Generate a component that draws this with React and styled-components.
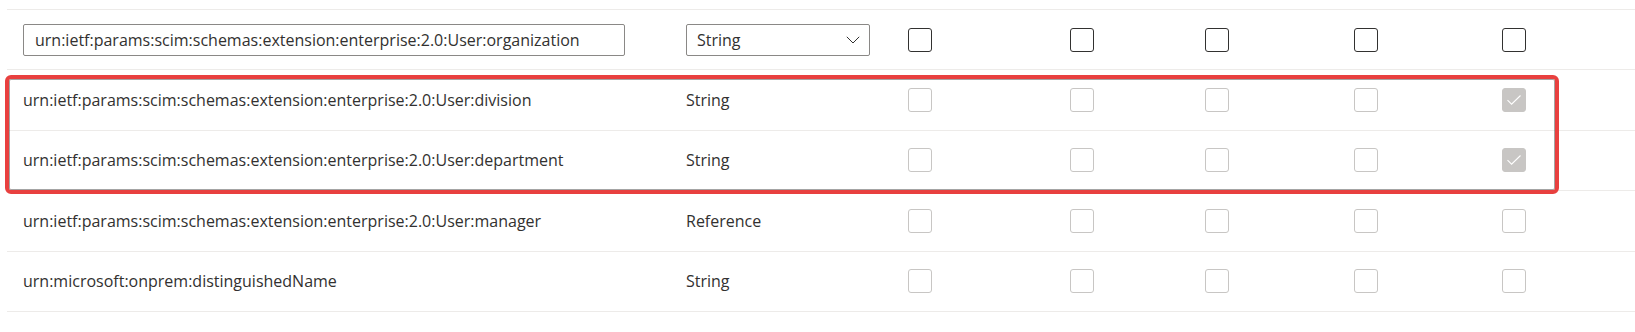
import React from "react";
import styled, { createGlobalStyle, css } from "styled-components";

const GlobalStyle = createGlobalStyle`
  html, body {
    margin: 0;
    padding: 0;
    background: #ffffff;
  }
  body {
    font-family: "Open Sans", "Noto Sans", sans-serif;
    color: #323130;
    overflow: hidden;
  }
`;

const Table = styled.div`
  margin: 9px 0 0 7px;
  border-top: 1px solid #edebe9;
`;

const Row = styled.div`
  display: grid;
  grid-template-columns: 679px 222px 162px 135px 149px 148px 1fr;
  align-items: center;
  height: 60.4px;
  box-sizing: border-box;
  border-bottom: 1px solid #edebe9;
`;

const NameCell = styled.div`
  padding-left: 16px;
  font-size: 16px;
  line-height: 22px;
  white-space: nowrap;
`;

const TypeCell = styled.div`
  font-size: 16px;
  line-height: 22px;
  white-space: nowrap;
`;

const FlagCell = styled.div`
  display: flex;
  align-items: center;
`;

const TextField = styled.input`
  display: block;
  box-sizing: border-box;
  width: 602px;
  height: 32px;
  margin: 0;
  padding: 0 11px;
  border: 1px solid #8a8886;
  border-radius: 2px;
  font: inherit;
  font-size: 16px;
  color: #323130;
  background: #ffffff;
  outline: none;
`;

const Dropdown = styled.div`
  box-sizing: border-box;
  width: 184px;
  height: 32px;
  padding: 0 9px 0 10px;
  border: 1px solid #8a8886;
  border-radius: 2px;
  display: flex;
  align-items: center;
  justify-content: space-between;
  font-size: 16px;
  color: #323130;
  background: #ffffff;
`;

const Chevron = styled.svg`
  width: 14px;
  height: 8px;
  flex: none;
`;

const Box = styled.span`
  display: inline-flex;
  align-items: center;
  justify-content: center;
  box-sizing: border-box;
  width: 24px;
  height: 24px;
  border-radius: 3px;
  border: 1px solid #323130;
  background: #ffffff;
  ${(p) =>
    p.$disabled &&
    css`
      border-color: #c8c6c4;
    `}
  ${(p) =>
    p.$checked &&
    css`
      border-color: #c8c6c4;
      background: #c8c6c4;
    `}
`;

const Highlight = styled.div`
  position: relative;
  &::after {
    content: "";
    position: absolute;
    top: 5px;
    left: -2px;
    right: 76px;
    bottom: -3px;
    border: 4px solid #e8403f;
    border-radius: 6px;
    box-shadow: inset 0 0 0 1px rgba(90, 90, 90, 0.55);
    pointer-events: none;
  }
`;

function Checkbox({ checked, disabled }) {
  return (
    <Box $checked={checked} $disabled={disabled} role="checkbox" aria-checked={!!checked}>
      {checked && (
        <svg width="16" height="12" viewBox="0 0 16 12">
          <path d="M1.5 6.2 L5.6 10.2 L14.5 1.5" fill="none" stroke="#ffffff" strokeWidth="1.1" />
        </svg>
      )}
    </Box>
  );
}

function Flags({ values, disabled }) {
  return values.map((v, i) => (
    <FlagCell key={i}>
      <Checkbox checked={v} disabled={disabled} />
    </FlagCell>
  ));
}

function AttributeRow({ name, type, flags }) {
  return (
    <Row>
      <NameCell>{name}</NameCell>
      <TypeCell>{type}</TypeCell>
      <Flags values={flags} disabled />
    </Row>
  );
}

const none = [false, false, false, false, false];
const requiredOnly = [false, false, false, false, true];

export default function App() {
  return (
    <>
      <GlobalStyle />
      <Table>
        <Row>
          <NameCell>
            <TextField
              defaultValue="urn:ietf:params:scim:schemas:extension:enterprise:2.0:User:organization"
              aria-label="Attribute name"
            />
          </NameCell>
          <TypeCell>
            <Dropdown role="combobox">
              <span>String</span>
              <Chevron viewBox="0 0 14 8">
                <path d="M0.8 0.8 L7 7 L13.2 0.8" fill="none" stroke="#323130" strokeWidth="1" />
              </Chevron>
            </Dropdown>
          </TypeCell>
          <Flags values={none} />
        </Row>
        <Highlight>
          <AttributeRow
            name="urn:ietf:params:scim:schemas:extension:enterprise:2.0:User:division"
            type="String"
            flags={requiredOnly}
          />
          <AttributeRow
            name="urn:ietf:params:scim:schemas:extension:enterprise:2.0:User:department"
            type="String"
            flags={requiredOnly}
          />
        </Highlight>
        <AttributeRow
          name="urn:ietf:params:scim:schemas:extension:enterprise:2.0:User:manager"
          type="Reference"
          flags={none}
        />
        <AttributeRow name="urn:microsoft:onprem:distinguishedName" type="String" flags={none} />
      </Table>
    </>
  );
}
